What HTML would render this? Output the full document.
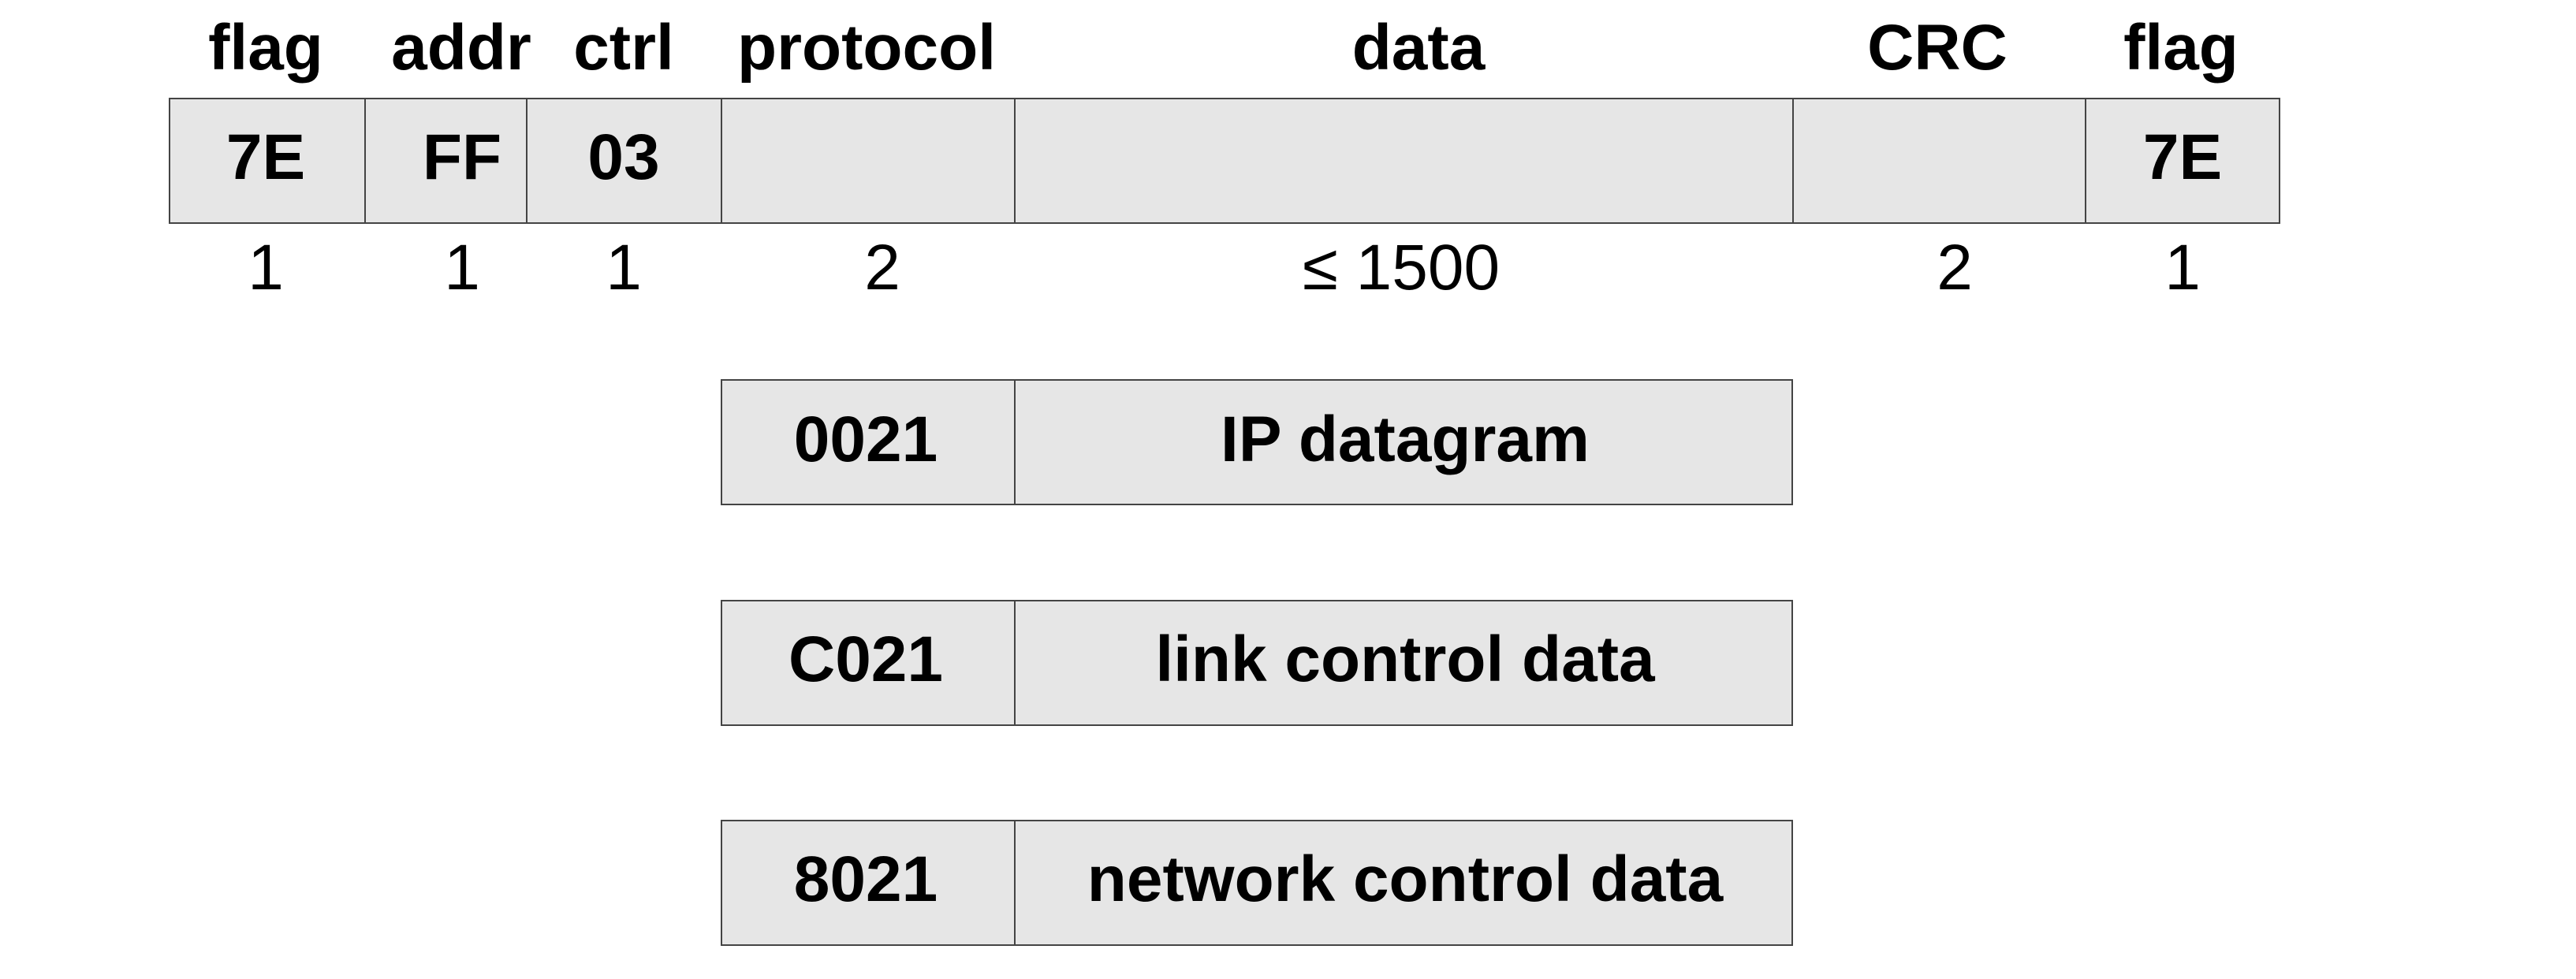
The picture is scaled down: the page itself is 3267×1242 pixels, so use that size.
<!DOCTYPE html>
<html><head><style>
body{margin:0;width:3267px;height:1242px;background:#fff;position:relative;overflow:hidden;font-family:"Liberation Sans",sans-serif;}
.b{position:absolute;background:#e6e6e6;border:2px solid #444;box-sizing:border-box;}
.t{position:absolute;transform:translateX(-50%);white-space:nowrap;font-size:82px;line-height:1;color:#000;}
.bd{font-weight:bold;}
</style></head><body>
<div class="b" style="left:214px;top:124px;width:250px;height:160px"></div>
<div class="b" style="left:462px;top:124px;width:207px;height:160px"></div>
<div class="b" style="left:667px;top:124px;width:249px;height:160px"></div>
<div class="b" style="left:914px;top:124px;width:374px;height:160px"></div>
<div class="b" style="left:1286px;top:124px;width:989px;height:160px"></div>
<div class="b" style="left:2273px;top:124px;width:373px;height:160px"></div>
<div class="b" style="left:2644px;top:124px;width:248px;height:160px"></div>
<div class="b" style="left:914px;top:481px;width:374px;height:160px"></div>
<div class="b" style="left:1286px;top:481px;width:988px;height:160px"></div>
<div class="b" style="left:914px;top:761px;width:374px;height:160px"></div>
<div class="b" style="left:1286px;top:761px;width:988px;height:160px"></div>
<div class="b" style="left:914px;top:1040px;width:374px;height:160px"></div>
<div class="b" style="left:1286px;top:1040px;width:988px;height:160px"></div>
<span class="t bd" style="left:337px;top:20px">flag</span>
<span class="t bd" style="left:585px;top:20px">addr</span>
<span class="t bd" style="left:791px;top:20px">ctrl</span>
<span class="t bd" style="left:1099px;top:20px">protocol</span>
<span class="t bd" style="left:1799px;top:20px">data</span>
<span class="t bd" style="left:2457px;top:20px">CRC</span>
<span class="t bd" style="left:2766px;top:20px">flag</span>
<span class="t bd" style="left:337px;top:159px">7E</span>
<span class="t bd" style="left:586px;top:159px">FF</span>
<span class="t bd" style="left:791px;top:159px">03</span>
<span class="t bd" style="left:2768px;top:159px">7E</span>
<span class="t" style="left:337px;top:299px">1</span>
<span class="t" style="left:586px;top:299px">1</span>
<span class="t" style="left:791px;top:299px">1</span>
<span class="t" style="left:1119px;top:299px">2</span>
<span class="t" style="left:1777px;top:299px">≤ 1500</span>
<span class="t" style="left:2479px;top:299px">2</span>
<span class="t" style="left:2768px;top:299px">1</span>
<span class="t bd" style="left:1098px;top:517px">0021</span>
<span class="t bd" style="left:1782px;top:517px">IP datagram</span>
<span class="t bd" style="left:1098px;top:796px">C021</span>
<span class="t bd" style="left:1782px;top:796px">link control data</span>
<span class="t bd" style="left:1098px;top:1075px">8021</span>
<span class="t bd" style="left:1782px;top:1075px">network control data</span>
</body></html>
